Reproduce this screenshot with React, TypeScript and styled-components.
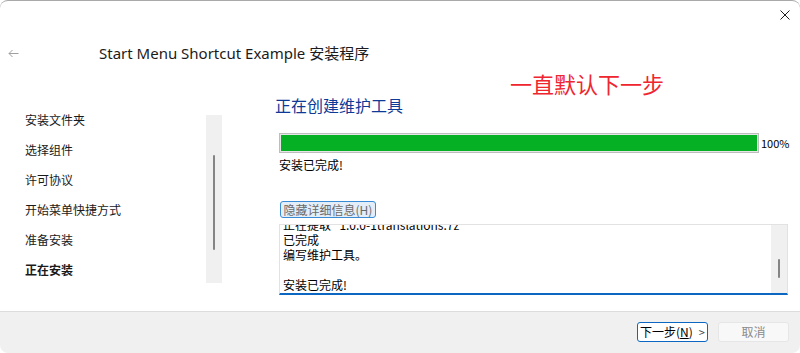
import React, { useLayoutEffect, useRef } from "react";
import styled, { createGlobalStyle } from "styled-components";

const Global = createGlobalStyle`
  html, body { margin: 0; padding: 0; background: #ffffff; }
  body { font-family: "Noto Sans CJK SC", "Noto Sans", sans-serif; }
  #root { width: 800px; height: 353px; }
`;

const Window = styled.div`
  position: relative;
  width: 800px;
  height: 353px;
  box-sizing: border-box;
  border-top: 1px solid #a9a9a9;
  border-radius: 8px;
  overflow: hidden;
  background: #ffffff;
  display: flex;
  flex-direction: column;
`;

const TitleBar = styled.div`
  height: 28px;
  display: flex;
  justify-content: flex-end;
  align-items: center;
  padding-right: 10px;
`;

const HeaderRow = styled.div`
  height: 48px;
  display: flex;
  align-items: center;
  padding-left: 8px;
`;

const Title = styled.div`
  margin-left: 80px;
  font-family: "Noto Sans", "Noto Sans CJK SC", sans-serif;
  font-size: 15px;
  color: #1b1b1b;
  line-height: 20px;
`;

const Annotation = styled.div`
  position: absolute;
  left: 510px;
  top: 68px;
  font-family: "Noto Sans CJK SC", sans-serif;
  font-size: 22px;
  line-height: 28px;
  color: #ef2630;
`;

const Main = styled.div`
  flex: 1;
  display: flex;
  min-height: 0;
`;

const Nav = styled.div`
  width: 222px;
  display: flex;
  align-items: flex-start;
  padding-top: 28px;
  box-sizing: border-box;
`;

const NavList = styled.ul`
  list-style: none;
  margin: 0;
  padding: 0 0 0 25px;
  width: 181px;
  flex-shrink: 0;
`;

const NavItem = styled.li<{ $active?: boolean }>`
  height: 30px;
  line-height: 30px;
  font-size: 12px;
  color: #1a1a1a;
  font-weight: ${(p) => (p.$active ? 700 : 400)};
  white-space: nowrap;
`;

const Track = styled.div<{ $height: number; $offset?: number }>`
  width: 16px;
  height: ${(p) => p.$height}px;
  margin-top: ${(p) => p.$offset ?? 0}px;
  background: #f0f0f0;
  flex-shrink: 0;
  display: flex;
  flex-direction: column;
`;

const Thumb = styled.div<{ $top: number; $height: number }>`
  margin-left: 7px;
  margin-top: ${(p) => p.$top}px;
  width: 2px;
  height: ${(p) => p.$height}px;
  border-radius: 1px;
  background: #858585;
`;

const Content = styled.div`
  margin-left: 53px;
  padding-top: 18px;
  display: flex;
  flex-direction: column;
  align-items: flex-start;
`;

const Heading = styled.h2`
  margin: 0;
  font-weight: 400;
  font-size: 16px;
  line-height: 20px;
  color: #0e3a97;
`;

const ProgressRow = styled.div`
  margin-top: 18px;
  margin-left: 4px;
  display: flex;
  align-items: center;
`;

const ProgressBar = styled.div`
  width: 480px;
  height: 20px;
  box-sizing: border-box;
  border: 1px solid #bdbdbd;
  padding: 1px;
  background: #e6e6e6;
`;

const ProgressFill = styled.div`
  height: 100%;
  background: #06b025;
`;

const Percent = styled.span`
  margin-left: 2px;
  font-size: 11px;
  line-height: 14px;
  color: #000;
`;

const Status = styled.div`
  margin-top: 5px;
  margin-left: 4px;
  font-size: 12px;
  line-height: 14px;
  color: #000;
`;

const DetailsButton = styled.div`
  margin-top: 29px;
  margin-left: 5px;
  width: 96px;
  height: 17px;
  box-sizing: border-box;
  border: 1px solid #3a8bd6;
  border-radius: 3px;
  background: #e3eef9;
  font-size: 12px;
  line-height: 15px;
  color: #6a6a6a;
  text-align: center;
  white-space: nowrap;
`;

const LogBox = styled.div`
  margin-top: 6px;
  margin-left: 4px;
  width: 509px;
  height: 71px;
  box-sizing: border-box;
  border: 1px solid #e2e2e2;
  border-bottom: 2px solid #0b67c2;
  display: flex;
`;

const LogText = styled.div`
  flex: 1;
  overflow: hidden;
  padding-left: 3px;
  font-size: 12px;
  line-height: 15px;
  color: #000;
`;

const LogLine = styled.div`
  height: 15px;
  white-space: pre;
`;

const Footer = styled.div`
  height: 42px;
  box-sizing: border-box;
  border-top: 1px solid #dcdcdc;
  background: #f0f0f0;
  display: flex;
  justify-content: flex-end;
  align-items: flex-start;
  gap: 10px;
  padding: 10px 11px 0 0;
`;

const FooterButton = styled.div<{ $primary?: boolean }>`
  width: 71px;
  height: 20px;
  box-sizing: border-box;
  border-radius: 3px;
  font-size: 12px;
  line-height: 18px;
  border: 1px solid ${(p) => (p.$primary ? "#0b67c2" : "#e6e6e6")};
  background: ${(p) => (p.$primary ? "#ffffff" : "#f8f8f8")};
  color: ${(p) => (p.$primary ? "#000000" : "#8a8a8a")};
  display: flex;
  align-items: center;
  justify-content: center;
  gap: 6px;
  white-space: nowrap;
`;

const Chevron = styled.span`
  color: #444;
  font-size: 11px;
`;

const navItems = ["安装文件夹", "选择组件", "许可协议", "开始菜单快捷方式", "准备安装", "正在安装"];

const logLines = [
  "正在提取 \"1.0.0-1translations.7z\"",
  "已完成",
  "编写维护工具。",
  "",
  "安装已完成!",
];

export default function App() {
  const logRef = useRef<HTMLDivElement>(null);
  useLayoutEffect(() => {
    if (logRef.current) logRef.current.scrollTop = logRef.current.scrollHeight;
  }, []);

  return (
    <>
      <Global />
      <Window>
        <TitleBar>
          <svg width="10" height="10" viewBox="0 0 10 10">
            <path d="M0.5 0.5 L9.5 9.5 M9.5 0.5 L0.5 9.5" stroke="#1f1f1f" strokeWidth="1" fill="none" />
          </svg>
        </TitleBar>
        <HeaderRow>
          <svg width="11" height="9" viewBox="0 0 11 9">
            <path d="M10.5 4.5 H1 M4.5 1 L1 4.5 L4.5 8" stroke="#a0a0a0" strokeWidth="1" fill="none" />
          </svg>
          <Title>Start Menu Shortcut Example 安装程序</Title>
        </HeaderRow>
        <Annotation>一直默认下一步</Annotation>
        <Main>
          <Nav>
            <NavList>
              {navItems.map((t, i) => (
                <NavItem key={t} $active={i === navItems.length - 1}>
                  {t}
                </NavItem>
              ))}
            </NavList>
            <Track $height={168} $offset={10}>
              <Thumb $top={40} $height={95} />
            </Track>
          </Nav>
          <Content>
            <Heading>正在创建维护工具</Heading>
            <ProgressRow>
              <ProgressBar>
                <ProgressFill style={{ width: "100%" }} />
              </ProgressBar>
              <Percent>100%</Percent>
            </ProgressRow>
            <Status>安装已完成!</Status>
            <DetailsButton>隐藏详细信息(H)</DetailsButton>
            <LogBox>
              <LogText ref={logRef}>
                {logLines.map((l, i) => (
                  <LogLine key={i}>{l}</LogLine>
                ))}
              </LogText>
              <Track $height={68}>
                <Thumb $top={34} $height={19} />
              </Track>
            </LogBox>
          </Content>
        </Main>
        <Footer>
          <FooterButton $primary>
            <span>
              下一步(<u>N</u>)
            </span>
            <Chevron>&gt;</Chevron>
          </FooterButton>
          <FooterButton>取消</FooterButton>
        </Footer>
      </Window>
    </>
  );
}
